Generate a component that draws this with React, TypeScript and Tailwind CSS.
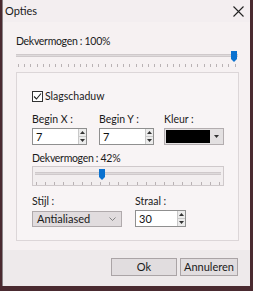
import React from "react";

const font = { fontFamily: 'Lato, "Segoe UI", sans-serif' };

function Ticks({ count }: { count: number }) {
  return (
    <div className="flex justify-between h-[3px]">
      {Array.from({ length: count }).map((_, i) => (
        <div key={i} className="w-px h-[3px] bg-[#b9b2b4]" />
      ))}
    </div>
  );
}

function Thumb() {
  return (
    <svg width="6" height="11" viewBox="0 0 6 11" className="block">
      <path d="M0 0 H6 V8 L3 11 L0 8 Z" fill="#0a72d0" />
    </svg>
  );
}

function Spinner() {
  return (
    <div className="flex flex-col w-[8px] h-full border-l border-[#c9c9c9] bg-[#ececec]">
      <div className="flex-1 flex items-center justify-center border-b border-[#c9c9c9]">
        <svg width="5" height="3" viewBox="0 0 5 3">
          <path d="M0 3 L2.5 0 L5 3 Z" fill="#333" />
        </svg>
      </div>
      <div className="flex-1 flex items-center justify-center">
        <svg width="5" height="3" viewBox="0 0 5 3">
          <path d="M0 0 L2.5 3 L5 0 Z" fill="#333" />
        </svg>
      </div>
    </div>
  );
}

function NumberBox({ value, width }: { value: string; width: string }) {
  return (
    <div className={`flex h-[17px] ${width} bg-white border border-[#8f8f8f]`}>
      <div className="flex-1 pl-[3px] text-[11px] leading-[15px] text-[#111]">{value}</div>
      <Spinner />
    </div>
  );
}

export default function App() {
  return (
    <div style={font} className="w-[253px] h-[291px] bg-[#4a2a30] overflow-hidden">
      <div className="ml-[2px] w-[248px] h-[286px] flex flex-col bg-[#f3eef0] border-l border-[#8a8487] text-[#1a1a1a]">
        {/* title bar */}
        <div className="h-[22px] flex items-center justify-between pl-[2px] pr-[6px]">
          <span className="text-[11px]">Opties</span>
          <svg width="11" height="11" viewBox="0 0 11 11">
            <path d="M0.5 0.5 L10.5 10.5 M10.5 0.5 L0.5 10.5" stroke="#222" strokeWidth="1.1" />
          </svg>
        </div>

        {/* content */}
        <div className="flex-1 flex flex-col pl-[13px] pr-[10px] bg-[#f6f1f2]">
          <div className="mt-[11px] text-[10.5px] tracking-[-0.3px] leading-[16px]">Dekvermogen : 100%</div>
          <div className="mt-[2px] relative h-[11px] w-[222px]">
            <div className="absolute left-0 right-0 top-[3px] h-[3px] bg-[#dedadb] border-y border-[#cfc9cb]" />
            <div className="absolute right-[1px] top-0">
              <Thumb />
            </div>
          </div>
          <div className="mt-[2px] w-[220px] pl-[2px]">
            <Ticks count={36} />
          </div>

          {/* group box */}
          <div className="mt-[5px] w-[223px] h-[169px] border border-[#dcd6d8] bg-[#f8f4f5] flex flex-col pl-[15px]">
            <div className="mt-[17px] flex items-center gap-[2px] h-[12px]">
              <div className="w-[11px] h-[11px] border border-[#333] bg-white flex items-center justify-center">
                <svg width="9" height="9" viewBox="0 0 9 9">
                  <path d="M1 4.5 L3.5 7 L8 1.5" stroke="#222" strokeWidth="1.1" fill="none" />
                </svg>
              </div>
              <span className="text-[10.5px] leading-[14px]">Slagschaduw</span>
            </div>

            <div className="mt-[9px] flex gap-[12px]">
              <div className="flex flex-col w-[55px]">
                <span className="text-[10.5px] leading-[16px]">Begin X :</span>
                <div className="mt-[1px]">
                  <NumberBox value="7" width="w-[55px]" />
                </div>
              </div>
              <div className="flex flex-col w-[55px]">
                <span className="text-[10.5px] leading-[16px]">Begin Y :</span>
                <div className="mt-[1px]">
                  <NumberBox value="7" width="w-[55px]" />
                </div>
              </div>
              <div className="flex flex-col ml-[-2px]">
                <span className="text-[10.5px] leading-[16px]">Kleur :</span>
                <div className="mt-[1px] flex h-[17px] w-[60px] bg-[#e3e0e1] border border-[#b3adaf] p-[1px]">
                  <div className="w-[44px] h-full bg-black" />
                  <div className="flex-1 flex items-center justify-center">
                    <svg width="5" height="3" viewBox="0 0 5 3">
                      <path d="M0 0 L2.5 3 L5 0 Z" fill="#333" />
                    </svg>
                  </div>
                </div>
              </div>
            </div>

            <div className="mt-[5px] text-[10.5px] tracking-[-0.3px] leading-[16px]">Dekvermogen : 42%</div>
            <div className="w-[192px] h-[20px] border border-[#cfc9cb] bg-[#f2eeef] px-[2px] flex flex-col">
              <div className="relative h-[11px] mt-[2px]">
                <div className="absolute left-0 right-0 top-[3px] h-[3px] bg-[#dedadb] border-y border-[#cfc9cb]" />
                <div className="absolute left-[64px] top-0">
                  <Thumb />
                </div>
              </div>
              <div className="mt-[2px] px-[1px]">
                <Ticks count={21} />
              </div>
            </div>

            <div className="mt-[7px] flex gap-[13px]">
              <div className="flex flex-col">
                <span className="text-[10.5px] leading-[16px]">Stijl :</span>
                <div className="mt-[2px] flex items-center justify-between h-[16px] w-[90px] bg-[#e1dcde] border border-[#b0aaac] pl-[4px] pr-[5px]">
                  <span className="text-[11px] leading-[14px]">Antialiased</span>
                  <svg width="7" height="4" viewBox="0 0 7 4">
                    <path d="M0.5 0.5 L3.5 3.5 L6.5 0.5" stroke="#777" strokeWidth="0.9" fill="none" />
                  </svg>
                </div>
              </div>
              <div className="flex flex-col">
                <span className="text-[10.5px] leading-[16px]">Straal :</span>
                <div className="mt-[1px]">
                  <NumberBox value="30" width="w-[51px]" />
                </div>
              </div>
            </div>
          </div>
          <div className="flex-1" />
        </div>

        {/* footer */}
        <div className="h-[36px] bg-[#eeeaeb] flex items-start justify-end gap-[3px] pt-[8px] pr-[12px]">
          <button className="w-[66px] h-[18px] bg-[#e1dddf] border border-[#aaa4a6] text-[11px] leading-[14px]">
            Ok
          </button>
          <button className="w-[58px] h-[18px] bg-[#e1dddf] border border-[#aaa4a6] text-[11px] leading-[14px]">
            Annuleren
          </button>
        </div>
      </div>
    </div>
  );
}
